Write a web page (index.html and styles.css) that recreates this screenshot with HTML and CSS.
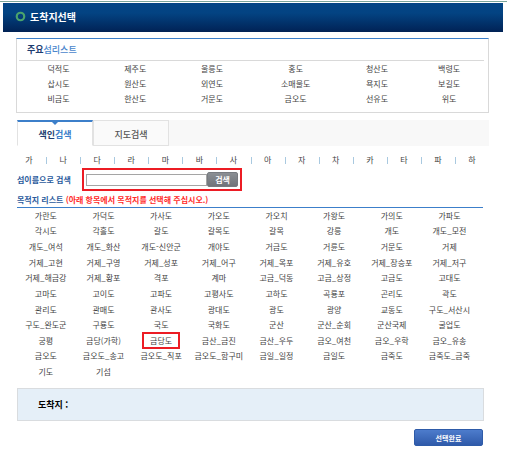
FILE: index.html
```html
<!DOCTYPE html>
<html lang="ko">
<head>
    <meta charset="UTF-8">
    <meta name="viewport" content="width=device-width, initial-scale=1.0">
    <title>도착지선택</title>
    <link rel="stylesheet" href="styles.css">
</head>
<body>

<header class="page-header">
    <svg class="ring" viewBox="0 0 10 10" aria-hidden="true">
        <circle cx="5" cy="5" r="3.4" fill="none" stroke="#4aa36c" stroke-width="2"/>
    </svg>
    <h1>도착지선택</h1>
</header>

<main class="content">
    <section class="main-islands">
        <h2>주요<span>섬리스트</span></h2>
        <table class="main-table">
            <colgroup>
                <col class="w-mid"><col class="w-narrow"><col class="w-mid"><col class="w-wide"><col class="w-narrow"><col>
            </colgroup>
            <tbody>
                <tr><td><a href="#">덕적도</a></td><td><a href="#">제주도</a></td><td><a href="#">울릉도</a></td><td><a href="#">홍도</a></td><td><a href="#">청산도</a></td><td><a href="#">백령도</a></td></tr>
                <tr><td><a href="#">삽시도</a></td><td><a href="#">원산도</a></td><td><a href="#">외연도</a></td><td><a href="#">소매물도</a></td><td><a href="#">욕지도</a></td><td><a href="#">보길도</a></td></tr>
                <tr><td><a href="#">비금도</a></td><td><a href="#">한산도</a></td><td><a href="#">거문도</a></td><td><a href="#">금오도</a></td><td><a href="#">선유도</a></td><td><a href="#">위도</a></td></tr>
            </tbody>
        </table>
    </section>

    <div class="tabs">
        <button type="button" class="tab active">색인<span>검색</span></button>
        <button type="button" class="tab">지도검색</button>
    </div>

    <nav class="index-letters">
        <a href="#">가</a>
        <a href="#">나</a>
        <a href="#">다</a>
        <a href="#">라</a>
        <a href="#">마</a>
        <a href="#">바</a>
        <a href="#">사</a>
        <a href="#">아</a>
        <a href="#">자</a>
        <a href="#">차</a>
        <a href="#">카</a>
        <a href="#">타</a>
        <a href="#">파</a>
        <a href="#">하</a>
    </nav>

    <form class="search">
        <label for="islandName">섬이름으로 검색</label>
        <div class="search-box">
            <input type="text" id="islandName">
            <button type="button">검색</button>
        </div>
    </form>

    <section class="destinations">
        <h2>목적지 리스트 <span>(아래 항목에서 목적지를 선택해 주십시오.)</span></h2>
        <table class="dest-table">
            <tbody>
                <tr><td><a href="#">가란도</a></td><td><a href="#">가덕도</a></td><td><a href="#">가사도</a></td><td><a href="#">가오도</a></td><td><a href="#">가오치</a></td><td><a href="#">가왕도</a></td><td><a href="#">가의도</a></td><td><a href="#">가파도</a></td></tr>
                <tr><td><a href="#">각시도</a></td><td><a href="#">각흘도</a></td><td><a href="#">갈도</a></td><td><a href="#">갈목도</a></td><td><a href="#">갈목</a></td><td><a href="#">강릉</a></td><td><a href="#">개도</a></td><td><a href="#">개도_모전</a></td></tr>
                <tr><td><a href="#">개도_여석</a></td><td><a href="#">개도_화산</a></td><td><a href="#">개도-신안군</a></td><td><a href="#">개야도</a></td><td><a href="#">거금도</a></td><td><a href="#">거륜도</a></td><td><a href="#">거문도</a></td><td><a href="#">거제</a></td></tr>
                <tr><td><a href="#">거제_고현</a></td><td><a href="#">거제_구영</a></td><td><a href="#">거제_성포</a></td><td><a href="#">거제_어구</a></td><td><a href="#">거제_옥포</a></td><td><a href="#">거제_유호</a></td><td><a href="#">거제_장승포</a></td><td><a href="#">거제_저구</a></td></tr>
                <tr><td><a href="#">거제_해금강</a></td><td><a href="#">거제_황포</a></td><td><a href="#">격포</a></td><td><a href="#">계마</a></td><td><a href="#">고금_덕동</a></td><td><a href="#">고금_상정</a></td><td><a href="#">고금도</a></td><td><a href="#">고대도</a></td></tr>
                <tr><td><a href="#">고마도</a></td><td><a href="#">고이도</a></td><td><a href="#">고파도</a></td><td><a href="#">고평사도</a></td><td><a href="#">고하도</a></td><td><a href="#">곡룡포</a></td><td><a href="#">곤리도</a></td><td><a href="#">곽도</a></td></tr>
                <tr><td><a href="#">관리도</a></td><td><a href="#">관매도</a></td><td><a href="#">관사도</a></td><td><a href="#">광대도</a></td><td><a href="#">광도</a></td><td><a href="#">광양</a></td><td><a href="#">교동도</a></td><td><a href="#">구도_서산시</a></td></tr>
                <tr><td><a href="#">구도_완도군</a></td><td><a href="#">구룡도</a></td><td><a href="#">국도</a></td><td><a href="#">국화도</a></td><td><a href="#">군산</a></td><td><a href="#">군산_순회</a></td><td><a href="#">군산국제</a></td><td><a href="#">굴업도</a></td></tr>
                <tr><td><a href="#">궁평</a></td><td><a href="#">금당(가학)</a></td><td><a href="#" class="picked">금당도</a></td><td><a href="#">금산_금진</a></td><td><a href="#">금산_우두</a></td><td><a href="#">금오_여천</a></td><td><a href="#">금오_우학</a></td><td><a href="#">금오_유송</a></td></tr>
                <tr><td><a href="#">금오도</a></td><td><a href="#">금오도_송고</a></td><td><a href="#">금오도_직포</a></td><td><a href="#">금오도_함구미</a></td><td><a href="#">금일_일정</a></td><td><a href="#">금일도</a></td><td><a href="#">금죽도</a></td><td><a href="#">금죽도_금죽</a></td></tr>
                <tr><td><a href="#">기도</a></td><td><a href="#">기섬</a></td><td></td><td></td><td></td><td></td><td></td><td></td></tr>
            </tbody>
        </table>
    </section>

    <div class="result">도착지 :</div>

    <div class="actions">
        <button type="button" class="done-btn">선택완료</button>
    </div>
</main>

</body>
</html>
```

FILE: styles.css
```css
* {
    box-sizing: border-box;
}

body {
    margin: 0;
    padding-top: 1px;
    background-color: #fff;
    color: #444;
    font-family: "Noto Sans CJK KR", sans-serif;
    font-size: 8px;
    line-height: 12px;
}

h1, h2 {
    margin: 0;
}

a {
    color: inherit;
    text-decoration: none;
}

button, input {
    font-family: inherit;
    padding: 0;
}

table {
    width: 100%;
    border-collapse: collapse;
    table-layout: fixed;
}

td {
    padding: 0;
    text-align: center;
    white-space: nowrap;
}

/* Header */
body::before {
    content: "";
    display: block;
    height: 1px;
    margin-bottom: 1px;
    background-color: #7ba69b;
}

.page-header {
    display: flex;
    align-items: center;
    gap: 4px;
    height: 29px;
    margin: 0 4px 0 3px;
    padding: 0 12px 2px;
    background: linear-gradient(#034586, #034382 35%, #012255);
    color: #fff;
}

.page-header h1 {
    font-size: 10px;
    line-height: 16px;
}

.ring {
    width: 11px;
    height: 11px;
}

.content {
    padding: 6px 18px 12px 16px;
}

/* Main islands */
.main-islands {
    height: 75px;
    padding: 0 4px 0 2px;
    border: 1px solid #d9d9d9;
    border-top-color: #3c7fca;
}

.main-islands h2 {
    padding: 3px 0 2px 8px;
    border-bottom: 1px solid #d9d9d9;
    color: #1d3d70;
    font-size: 9px;
    line-height: 16px;
}

.main-islands h2 span {
    color: #4a86cc;
    font-weight: 500;
}

.main-table {
    height: 46px;
}

.w-narrow {
    width: 16%;
}

.w-mid {
    width: 17%;
}

.w-wide {
    width: 19%;
}

/* Tabs */
.tabs {
    display: flex;
    height: 26px;
    margin: 7px 0 0 1px;
    background-color: #f8f8f8;
}

.tab {
    position: relative;
    width: 76px;
    padding-top: 2px;
    border: 1px solid #e2e2e2;
    background-color: #fafafa;
    color: #555;
    font-size: 9px;
    font-weight: 500;
}

.tab.active {
    border-top: 2px solid #3c7fca;
    border-bottom-color: #fff;
    background-color: #fff;
    color: #1d3d70;
    font-weight: bold;
}

.tab.active span {
    color: #3c7fca;
}

.tab.active::after {
    content: "";
    position: absolute;
    top: 0;
    left: 50%;
    margin-left: -3px;
    border: 3px solid transparent;
    border-top-color: #3c7fca;
    border-bottom: 0;
}

/* Index letters */
.index-letters {
    display: flex;
    margin: 8px 0 0 -4px;
}

.index-letters a {
    position: relative;
    flex: 1;
    text-align: center;
}

.index-letters a + a::before {
    content: "";
    position: absolute;
    top: 3px;
    left: 0;
    width: 1px;
    height: 7px;
    background-color: #a9c9e0;
}

/* Search */
.search {
    display: flex;
    align-items: center;
    gap: 8px;
    margin: 2px 0 0 1px;
}

.search label {
    width: 57px;
    color: #2a5a9c;
    font-weight: bold;
    white-space: nowrap;
}

.search-box {
    display: flex;
    align-items: center;
    width: 160px;
    height: 23px;
    padding: 0 2px;
    border: 2px solid #ec1c24;
}

.search-box input {
    flex: 1;
    min-width: 0;
    height: 12px;
    border: 1px solid #a5a5a5;
    border-radius: 0;
    font-size: 8px;
}

.search-box button {
    width: 31px;
    height: 15px;
    border: 1px solid #777b80;
    border-radius: 2px;
    background: linear-gradient(#8b8f94, #70747a);
    color: #fff;
    font-size: 8px;
    font-weight: bold;
    line-height: 12px;
}

/* Destination list */
.destinations {
    margin: 3px 6px 0 1px;
}

.destinations h2 {
    padding-bottom: 1px;
    border-bottom: 1px solid #3c7fca;
    color: #2a5a9c;
    font-size: 8px;
    line-height: 12px;
}

.destinations h2 span {
    color: #ff2a2a;
}

.dest-table {
    width: 99%;
    height: 172px;
}

.picked {
    position: relative;
}

.picked::after {
    content: "";
    position: absolute;
    inset: -3px -8px;
    border: 2px solid #ec1c24;
}

/* Result */
.result {
    margin: 8px 5px 0 1px;
    padding: 8px 20px;
    border: 1px solid #d9dcdf;
    background-color: #e5eff8;
    color: #000;
    font-size: 9px;
    font-weight: bold;
    line-height: 15px;
}

.actions {
    display: flex;
    justify-content: flex-end;
    margin: 8px 6px 0 0;
}

.done-btn {
    width: 69px;
    height: 17px;
    border: 1px solid #2e5ba8;
    border-radius: 2px;
    background: linear-gradient(#4d7ccc, #2f5aaa);
    color: #fff;
    font-size: 7px;
    font-weight: bold;
    line-height: 12px;
}
```
